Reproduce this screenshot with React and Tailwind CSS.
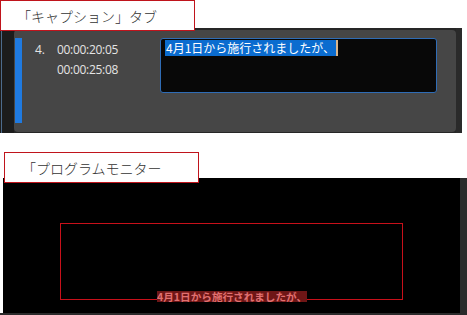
export default function App() {
  const jp = { fontFamily: '"Noto Sans CJK JP", "Noto Sans", sans-serif' };
  return (
    <div className="w-[467px] h-[315px] bg-white overflow-hidden flex flex-col" style={jp}>
      {/* Caption tab section */}
      <div className="flex flex-col">
        <div className="relative z-10 w-[195px] h-[31px] border border-[#c0141c] bg-white flex items-center pl-[16px] text-[14px] leading-none text-[#333] font-light">
          「キャプション」タブ
        </div>
        <div className="-mt-[3px] w-[462px] h-[105px] bg-[#262626] flex">
          <div className="w-[14px] h-full bg-[#1c1c1c] flex">
            <div className="ml-[1px] w-[1px] h-full bg-[#4d6b8c]" />
          </div>
          <div className="mt-[2px] mb-[1px] w-[442px] bg-[#464646] rounded-[4px] flex items-start pt-[8px]">
            <div className="ml-[1px] w-[7px] h-[85px] bg-[#1f7ae0]" />
            <div
              className="ml-[13px] mt-[2px] w-[22px] text-[12px] leading-[20px] text-[#e4e4e4]"
              style={{ fontFamily: '"Open Sans", sans-serif' }}
            >
              4.
            </div>
            <div
              className="mt-[2px] w-[103px] flex flex-col text-[12px] leading-[20px] text-[#e4e4e4] tracking-[-0.3px]"
              style={{ fontFamily: '"Open Sans", sans-serif' }}
            >
              <span>00:00:20:05</span>
              <span>00:00:25:08</span>
            </div>
            <div className="w-[277px] h-[55px] bg-[#080808] border border-[#2f6cb5] rounded-[3px] pl-[4px] pt-[1px] flex items-start">
              <span className="bg-[#0b6ccf] text-white text-[12px] leading-[16px] px-[1px]">4月1日から施行されましたが、</span>
              <span className="w-[2px] h-[16px] bg-[#d9b58a]" />
            </div>
          </div>
          <div className="w-[6px] h-full bg-[#2a2a2a]" />
        </div>
      </div>

      {/* Program monitor section */}
      <div className="mt-[19px] flex flex-col">
        <div className="relative z-10 ml-[4px] w-[195px] h-[31px] border border-[#c0141c] bg-white flex items-center pl-[17px] text-[14px] leading-none text-[#333] font-light">
          「プログラムモニター
        </div>
        <div className="-mt-[5px] flex flex-col">
          <div className="flex">
            <div className="ml-[3px] w-[457px] h-[135px] bg-black relative pt-[45px] pl-[57px]">
              <div className="w-[343px] h-[77px] border-[1.5px] border-[#c8101a]" />
              <div className="absolute left-[154px] top-[113px] bg-[#6e1616] text-[#e07070] text-[10.6px] leading-[11px] font-bold">
                4月1日から施行されましたが、
              </div>
            </div>
            <div className="w-[7px] h-[135px] bg-[#2b2b2b]" />
          </div>
          <div className="h-[2px] bg-[#2b2b2b]" />
        </div>
      </div>
    </div>
  );
}
